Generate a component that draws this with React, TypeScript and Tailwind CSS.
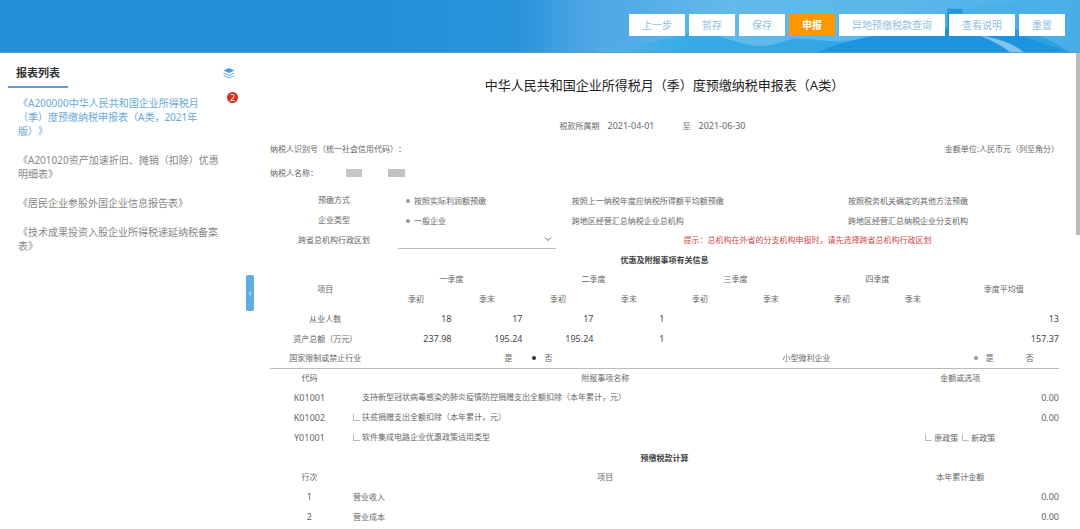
import React from 'react';

const actions = [
  { label: '上一步' },
  { label: '暂存' },
  { label: '保存' },
  { label: '申报', primary: true },
  { label: '异地预缴税款查询' },
  { label: '查看说明' },
  { label: '重置' },
];

const reports = [
  { title: '《A200000中华人民共和国企业所得税月（季）度预缴纳税申报表（A类，2021年版）》', active: true },
  { title: '《A201020资产加速折旧、摊销（扣除）优惠明细表》' },
  { title: '《居民企业参股外国企业信息报告表》' },
  { title: '《技术成果投资入股企业所得税递延纳税备案表》' },
];

const quarters = ['一季度', '二季度', '三季度', '四季度'];

const quarterRows = [
  { name: '从业人数', values: ['18', '17', '17', '1', '', '', '', ''], average: '13' },
  { name: '资产总额（万元）', values: ['237.98', '195.24', '195.24', '1', '', '', '', ''], average: '157.37' },
];

const incomeRows = [
  { line: '1', name: '营业收入', amount: '0.00' },
  { line: '2', name: '营业成本', amount: '0.00' },
];

const HeaderScenery = () => (
  <svg viewBox="0 0 700 53" preserveAspectRatio="none" className="absolute right-0 top-0 h-full w-[65%]" aria-hidden="true">
    <defs>
      <linearGradient id="sky" x1="0" x2="1" y1="0" y2="0">
        <stop offset="0" stopColor="#2290d9" />
        <stop offset="0.2" stopColor="#2a94db" />
        <stop offset="0.3" stopColor="#4da6e4" />
        <stop offset="0.5" stopColor="#62b9ea" />
        <stop offset="0.75" stopColor="#5ab7ea" />
        <stop offset="1" stopColor="#4aaee7" />
      </linearGradient>
      <linearGradient id="hill" x1="0" x2="1" y1="0" y2="0">
        <stop offset="0" stopColor="#56b0e8" />
        <stop offset="0.2" stopColor="#36abe6" />
        <stop offset="1" stopColor="#2a9fe2" />
      </linearGradient>
    </defs>
    <rect width="700" height="53" fill="url(#sky)" />
    <path d="M480 25c20-10 45-14 68-11 20 2 40-8 70-10 30-4 50 2 82 0v49H480z" fill="#48aee7" opacity="0.5" />
    <path d="M220 50c22-5 40-3 58-8 16-5 28-8 42-9 18 2 34 9 52 13 22 3 30-5 46-7 20 1 30 4 48 3 30-4 60-14 100-14h60c30 4 50 16 64 25H220z" fill="url(#hill)" />
    <path d="M440 53c26-13 62-19 110-22 40-4 72-1 96 7 16 6 30 11 44 15z" fill="#1d95de" />
    <path d="M572 13v-4h-4v28h4V13z" fill="#1a8ad4" />
    <path d="M568 9h15v5h-15z" fill="#2497de" />
    <path d="M600 36c18 3 34 9 44 17h-14c-8-7-18-11-30-17z" fill="#7fc3ee" />
  </svg>
);

const LayersIcon = () => (
  <svg viewBox="0 0 12 12" className="h-3 w-3" fill="none" aria-hidden="true">
    <path d="M6 1l5.500 2.500L6 6 .5 3.500z" fill="#3d9fe6" />
    <path d="M.5 6L6 8.500 11.500 6M.5 8.500L6 11l5.500-2.500" stroke="#5fa9dc" strokeWidth="0.9" />
  </svg>
);

interface RadioProps {
  name: string;
  label: string;
  checked?: boolean;
  dark?: boolean;
  wide?: boolean;
}

const Radio: React.FC<RadioProps> = ({ name, label, checked, dark, wide }) => (
  <label className={`inline-flex items-center ${wide ? 'gap-2' : 'gap-1'}`}>
    <input
      type="radio"
      name={name}
      defaultChecked={checked}
      className={`h-1 w-1 appearance-none rounded-full ${dark ? 'checked:bg-[#333]' : 'checked:bg-[#999]'}`}
    />
    {label}
  </label>
);

const Checkbox: React.FC<{ label: string; hidden?: boolean }> = ({ label, hidden }) => (
  <label className="inline-flex items-center gap-0.5">
    <input
      type="checkbox"
      className={`h-[7px] w-[7px] appearance-none border-b border-l ${hidden ? 'border-transparent' : 'border-[#bbb]'}`}
    />
    {label}
  </label>
);

const SectionTitle: React.FC<{ children: React.ReactNode }> = ({ children }) => (
  <h2 className="h-[19px] text-center text-[8px] font-bold leading-[19px] text-[#444]">{children}</h2>
);

const Header = () => (
  <header className="relative h-[53px] border-b border-[#4f9fd6] bg-[#2290d9]">
    <HeaderScenery />
    <div className="relative flex justify-end gap-1 pr-[15px] pt-[14px]">
      {actions.map((action) => (
        <button
          key={action.label}
          type="button"
          className={`h-[22px] px-[13px] text-[10px] leading-[22px] ${
            action.primary ? 'bg-[#ff9800] font-bold text-white' : 'bg-white text-[#8fbfe2]'
          }`}
        >
          {action.label}
        </button>
      ))}
    </div>
  </header>
);

const Sidebar = () => (
  <aside className="w-[246px] shrink-0 px-2">
    <div className="flex items-center justify-between pr-[3px]">
      <h2 className="border-b-2 border-[#6597df] px-2 pb-[5px] pt-3 text-[11px] font-bold leading-4 text-[#333]">报表列表</h2>
      <button type="button" aria-label="切换报表" className="mt-1">
        <LayersIcon />
      </button>
    </div>
    <nav className="relative flex flex-col gap-[15px] pl-2.5 pr-4 pt-2">
      {reports.map((report) => (
        <a
          key={report.title}
          href="#"
          className={`text-[10px] leading-[14px] ${report.active ? 'pr-5 text-[#69a9d8]' : 'text-[#888]'}`}
        >
          {report.title}
        </a>
      ))}
      <span className="absolute right-0 top-1 h-[11px] w-[11px] rounded-full bg-[#dc3018] text-center text-[9px] leading-[11px] text-white">
        2
      </span>
    </nav>
  </aside>
);

const MethodTable = () => (
  <table className="w-full table-fixed">
    <colgroup>
      <col className="w-[128px]" />
      <col className="w-[20%]" />
      <col className="w-[35%]" />
      <col />
    </colgroup>
    <tbody>
      <tr className="h-5">
        <th className="font-normal">预缴方式</th>
        <td className="pl-2"><Radio name="method" label="按照实际利润额预缴" checked /></td>
        <td className="pl-2"><Radio name="method" label="按照上一纳税年度应纳税所得额平均额预缴" /></td>
        <td className="pl-2"><Radio name="method" label="按照税务机关确定的其他方法预缴" /></td>
      </tr>
      <tr className="h-5">
        <th className="font-normal">企业类型</th>
        <td className="pl-2"><Radio name="kind" label="一般企业" checked /></td>
        <td className="pl-2"><Radio name="kind" label="跨地区经营汇总纳税企业总机构" /></td>
        <td className="pl-2"><Radio name="kind" label="跨地区经营汇总纳税企业分支机构" /></td>
      </tr>
      <tr className="h-5">
        <th className="font-normal"><label htmlFor="region">跨省总机构行政区划</label></th>
        <td>
          <div className="relative">
            <select id="region" defaultValue="" className="block h-[18px] w-full appearance-none border-b border-[#bbb] bg-transparent">
              <option value=""></option>
            </select>
            <svg viewBox="0 0 8 8" className="pointer-events-none absolute right-1 top-1 h-2 w-2" fill="none" stroke="#666" aria-hidden="true">
              <path d="M1 2.500l3 3 3-3" />
            </svg>
          </div>
        </td>
        <td colSpan={2} className="text-center text-[#cf4b45]">
          提示：总机构在外省的分支机构申报时，请先选择跨省总机构行政区划
        </td>
      </tr>
    </tbody>
  </table>
);

const QuarterTable = () => (
  <table className="w-full table-fixed border-b border-[#bbb] text-center">
    <colgroup>
      <col className="w-[14%]" />
      <col span={8} className="w-[9%]" />
      <col className="w-[14%]" />
    </colgroup>
    <thead>
      <tr className="h-5">
        <th rowSpan={2} className="font-normal">项目</th>
        {quarters.map((quarter) => (
          <th key={quarter} colSpan={2} className="font-normal">{quarter}</th>
        ))}
        <th rowSpan={2} className="font-normal">季度平均值</th>
      </tr>
      <tr className="h-5">
        {quarters.map((quarter) => (
          <React.Fragment key={quarter}>
            <th className="font-normal">季初</th>
            <th className="font-normal">季末</th>
          </React.Fragment>
        ))}
      </tr>
    </thead>
    <tbody>
      {quarterRows.map((row) => (
        <tr key={row.name} className="h-5">
          <td>{row.name}</td>
          {row.values.map((value, i) => (
            <td key={i} className="text-right text-[9px] text-[#444]">{value}</td>
          ))}
          <td className="text-right text-[9px] text-[#444]">{row.average}</td>
        </tr>
      ))}
      <tr className="h-[19px]">
        <td>国家限制或禁止行业</td>
        <td colSpan={4}>
          <div className="flex justify-center gap-5">
            <Radio name="restricted" label="是" wide />
            <Radio name="restricted" label="否" checked dark wide />
          </div>
        </td>
        <td colSpan={4}>小型微利企业</td>
        <td>
          <div className="flex justify-center gap-5">
            <Radio name="small" label="是" checked wide />
            <Radio name="small" label="否" wide />
          </div>
        </td>
      </tr>
    </tbody>
  </table>
);

const Columns = () => (
  <colgroup>
    <col className="w-[10%]" />
    <col className="w-[65%]" />
    <col className="w-[25%]" />
  </colgroup>
);

const ItemTable = () => (
  <table className="w-full table-fixed">
    <Columns />
    <thead>
      <tr className="h-[19px]">
        <th className="font-normal">代码</th>
        <th className="font-normal">附报事项名称</th>
        <th className="font-normal">金额或选项</th>
      </tr>
    </thead>
    <tbody>
      <tr className="h-5">
        <td className="text-center text-[9px]">K01001</td>
        <td className="pl-1"><Checkbox label="支持新型冠状病毒感染的肺炎疫情防控捐赠支出全额扣除（本年累计，元）" hidden /></td>
        <td className="text-right text-[9px]">0.00</td>
      </tr>
      <tr className="h-5">
        <td className="text-center text-[9px]">K01002</td>
        <td className="pl-1"><Checkbox label="扶贫捐赠支出全额扣除（本年累计，元）" /></td>
        <td className="text-right text-[9px]">0.00</td>
      </tr>
      <tr className="h-5">
        <td className="text-center text-[9px]">Y01001</td>
        <td className="pl-1"><Checkbox label="软件集成电路企业优惠政策适用类型" /></td>
        <td>
          <div className="flex justify-center gap-1">
            <Checkbox label="原政策" />
            <Checkbox label="新政策" />
          </div>
        </td>
      </tr>
    </tbody>
  </table>
);

const IncomeTable = () => (
  <table className="w-full table-fixed">
    <Columns />
    <thead>
      <tr className="h-5">
        <th className="font-normal">行次</th>
        <th className="font-normal">项目</th>
        <th className="font-normal">本年累计金额</th>
      </tr>
    </thead>
    <tbody>
      {incomeRows.map((row) => (
        <tr key={row.line} className="h-5">
          <td className="text-center text-[9px]">{row.line}</td>
          <td className="pl-1">{row.name}</td>
          <td className="text-right text-[9px]">{row.amount}</td>
        </tr>
      ))}
    </tbody>
  </table>
);

const App: React.FC = () => {
  return (
    <div className="flex h-screen flex-col overflow-hidden bg-white font-['Noto_Sans','Noto_Sans_CJK_SC',sans-serif] text-[#666] [text-spacing-trim:space-all]">
      <Header />
      <div className="flex min-h-0 flex-1">
        <Sidebar />
        <button
          type="button"
          aria-label="收起"
          className="mt-[222px] flex h-9 w-2 shrink-0 items-center justify-center rounded-xs bg-[#5fade3] text-[8px] text-white"
        >
          ‹
        </button>
        <main className="min-w-0 flex-1 overflow-hidden pl-4 pr-[17px] text-[8px] leading-3">
          <h1 className="pt-[22px] text-center text-[13px] leading-5 text-[#222]">
            中华人民共和国企业所得税月（季）度预缴纳税申报表（A类）
          </h1>
          <div className="mt-[25px] flex justify-center gap-2 pr-6">
            <span>税款所属期</span>
            <span className="text-[9px]">2021-04-01</span>
            <span className="pl-5">至</span>
            <span className="text-[9px]">2021-06-30</span>
          </div>
          <div className="mt-[11px] flex justify-between">
            <span>纳税人识别号（统一社会信用代码）：</span>
            <span>金额单位:人民币元（列至角分）</span>
          </div>
          <div className="mb-[11px] mt-3 flex items-center">
            <span className="w-[76px]">纳税人名称：</span>
            <span className="h-2 w-4 bg-[#c6c6c6]" />
            <span className="ml-[26px] h-2 w-[17px] bg-[#c2c2c2]" />
          </div>
          <MethodTable />
          <SectionTitle>优惠及附报事项有关信息</SectionTitle>
          <QuarterTable />
          <ItemTable />
          <SectionTitle>预缴税款计算</SectionTitle>
          <IncomeTable />
        </main>
        <div className="w-1 shrink-0">
          <div className="h-[182px] bg-[#bbb]" />
        </div>
      </div>
    </div>
  );
};

export default App;
